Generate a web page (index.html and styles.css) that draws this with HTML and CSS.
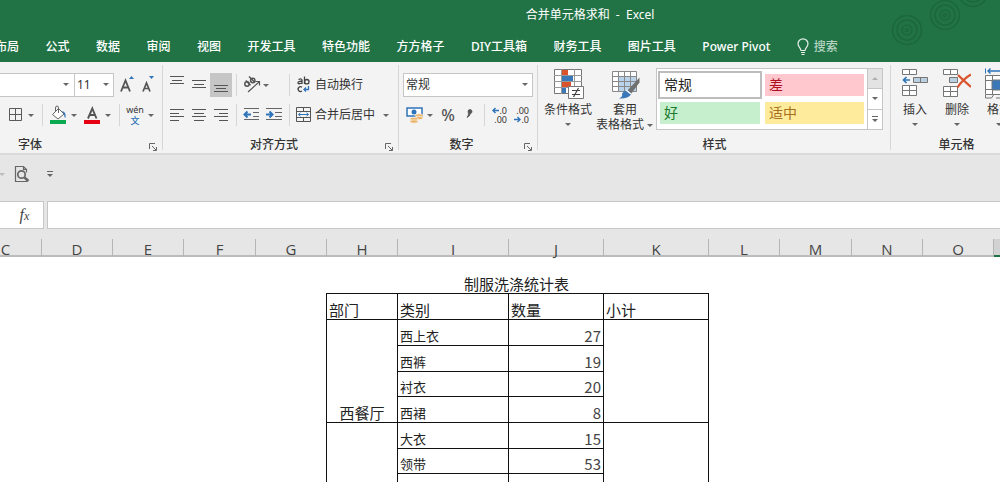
FILE: index.html
```html
<!DOCTYPE html>
<html lang="zh-CN">
<head>
<meta charset="utf-8">
<meta name="viewport" content="width=device-width, initial-scale=1">
<title>合并单元格求和 - Excel</title>
<link rel="stylesheet" href="styles.css">
</head>
<body>
<header class="titlebar">
  <svg class="rings" width="120" height="48" viewBox="0 0 120 48" fill="none" stroke="#1c673c" stroke-width="1.6">
    <circle cx="27" cy="30" r="14.500"/><circle cx="27" cy="30" r="10"/><circle cx="27" cy="30" r="5"/><circle cx="27" cy="30" r="1.5"/>
    <circle cx="65" cy="15" r="14.500"/><circle cx="65" cy="15" r="10"/><circle cx="65" cy="15" r="5"/><circle cx="65" cy="15" r="1.5"/>
    <circle cx="93" cy="-8" r="14.500"/><circle cx="93" cy="-8" r="10"/>
  </svg>
  <h1 class="doc-title">合并单元格求和&nbsp; -&nbsp; Excel</h1>
  <nav class="tabs">
    <button class="tab">布局</button><button class="tab">公式</button><button class="tab">数据</button><button class="tab">审阅</button><button class="tab">视图</button><button class="tab">开发工具</button><button class="tab">特色功能</button><button class="tab">方方格子</button><button class="tab">DIY工具箱</button><button class="tab">财务工具</button><button class="tab">图片工具</button><button class="tab">Power Pivot</button>
    <button class="tab search">
      <svg width="12" height="18" viewBox="0 0 12 18" fill="none" stroke="#e6f1ea" stroke-width="1.2"><path d="M4 12.5C4 10 1 9 1 5.8A5 5 0 0 1 11 5.8C11 9 8 10 8 12.5zM4 14.5h4M4.5 16.5h3"/></svg>
      <span>搜索</span>
    </button>
  </nav>
</header>

<section class="ribbon">
  <div class="group group-font">
    <div class="tools">
      <div class="row">
        <div class="combo combo-font"><select aria-label="字体名称"><option></option></select></div>
        <div class="combo combo-size"><select aria-label="字号"><option>11</option></select></div>
        <button class="tool" aria-label="增大字号"><svg width="20" height="22" viewBox="0 0 20 22"><path d="M4 17.500L8.500 6.500L13 17.500M5.600 13.500h5.800" fill="none" stroke="#555" stroke-width="1.800"/><path d="M12 5l2.500-3L17 5z" fill="#2f73b8"/></svg></button>
        <button class="tool" aria-label="减小字号"><svg width="20" height="22" viewBox="0 0 20 22"><path d="M4 17.500L7.500 9L11 17.500M5.200 14.500h4.600" fill="none" stroke="#555" stroke-width="1.700"/><path d="M10 2l2.500 3L15 2z" fill="#2f73b8"/></svg></button>
      </div>
      <div class="row row-font">
        <button class="split" aria-label="边框"><svg width="20" height="20" viewBox="0 0 20 20" fill="none" stroke="#5a5a5a"><path d="M4.500 3.500h12v12h-12zM10.500 3.500v12M4.500 9.500h12"/></svg><i class="caret"></i></button>
        <span class="sep"></span>
        <button class="split" aria-label="填充颜色"><svg width="20" height="20" viewBox="0 0 20 20"><path d="M4.500 9.500l6-6 5.500 5.500-6 5z" fill="#fff" stroke="#666"/><path d="M7.500 7V3q0-2 1.500-2t1.500 2v5" fill="none" stroke="#666"/><path d="M14 6q4.500 1 3.500 7-1.500-1-1.500-4z" fill="#2f73b8"/><path d="M2 15h16v4H2z" fill="#0caa50"/></svg><i class="caret"></i></button>
        <button class="split color" aria-label="字体颜色"><svg width="20" height="20" viewBox="0 0 20 20"><path d="M6 13.500L10.300 3.500L14.500 13.500M7.500 10h5.500" fill="none" stroke="#555" stroke-width="1.900"/><path d="M2 15h16v4H2z" fill="#e60012"/></svg><i class="caret"></i></button>
        <span class="sep"></span>
        <button class="split" aria-label="拼音"><span class="pinyin"><span>wén</span><b>文</b></span><i class="caret"></i></button>
      </div>
    </div>
    <div class="foot"><span class="name">字体</span><button class="launcher" aria-label="字体设置"><svg width="9" height="9" viewBox="0 0 9 9" fill="none" stroke="#666"><path d="M.5 6V.5H6M3 3l4 4M7.500 4v3.500H4"/></svg></button></div>
  </div>

  <div class="group group-align">
    <div class="tools">
      <div class="row">
        <button class="icon" aria-label="顶端对齐"><svg width="22" height="24" viewBox="0 0 22 24" stroke="#555"><path d="M4 3.500h14M6 7.500h10M4 10.500h14"/></svg></button>
        <button class="icon" aria-label="垂直居中"><svg width="22" height="24" viewBox="0 0 22 24" stroke="#555"><path d="M4 7.500h14M6 11.500h10M4 14.500h14"/></svg></button>
        <button class="icon active" aria-label="底端对齐"><svg width="22" height="24" viewBox="0 0 22 24" stroke="#555"><path d="M4 12.500h14M6 15.500h10M4 18.500h14"/></svg></button>
        <span class="sep"></span>
        <button class="split orient" aria-label="方向"><svg width="22" height="20" viewBox="0 0 22 20" fill="none" stroke="#555" stroke-width="1.500"><circle cx="6" cy="9" r="2.200"/><path d="M4.800 5.500l4.700 4.700M8 1.500l6 6"/><circle cx="11.800" cy="5.500" r="2.200"/><path d="M7 17L18 7M14.500 6.500H18.500V10.500" stroke-width="1.200"/></svg><i class="caret"></i></button>
        <span class="sep last"></span>
        <button class="labeled"><svg width="22" height="20" viewBox="0 0 22 20" fill="none" stroke="#444" stroke-width="1.300"><path d="M5.500 4.500q3.500-1.500 3.500 1V9M9 6.300q-4-.3-4 1.500T9 8M11.500 1.500V9"/><circle cx="13.800" cy="6.700" r="2.200"/><path d="M9 12.200a2.400 2.400 0 1 0 0 3.800"/><path d="M15.500 11v3.500h-4M13 12.500l-2 2 2 2" stroke="#2f73b8"/></svg>自动换行</button>
      </div>
      <div class="row">
        <button class="icon" aria-label="左对齐"><svg width="22" height="24" viewBox="0 0 22 24" stroke="#555"><path d="M4 6.500h14M4 10.500h9M4 13.500h14M4 17.500h9"/></svg></button>
        <button class="icon" aria-label="居中"><svg width="22" height="24" viewBox="0 0 22 24" stroke="#555"><path d="M4 6.500h14M6 10.500h10M4 13.500h14M6 17.500h10"/></svg></button>
        <button class="icon" aria-label="右对齐"><svg width="22" height="24" viewBox="0 0 22 24" stroke="#555"><path d="M4 6.500h14M9 10.500h9M4 13.500h14M9 17.500h9"/></svg></button>
        <span class="sep"></span>
        <button class="icon" aria-label="减少缩进"><svg width="22" height="24" viewBox="0 0 22 24" stroke="#666"><path d="M3 5.500h15M12 9.500h6M12 13.500h6M3 16.500h15"/><path d="M10 11.500H4M6.500 8.500l-3 3 3 3" fill="none" stroke="#2f73b8" stroke-width="2"/></svg></button>
        <button class="icon" aria-label="增加缩进"><svg width="22" height="24" viewBox="0 0 22 24" stroke="#666"><path d="M3 5.500h16M12 9.500h7M12 13.500h7M3 16.500h16"/><path d="M3 11.500h6M6.500 8.500l3 3-3 3" fill="none" stroke="#2f73b8" stroke-width="2"/></svg></button>
        <span class="sep last"></span>
        <button class="labeled"><svg width="22" height="20" viewBox="0 0 22 20" fill="none" stroke="#555"><path d="M3.500 2.500h14v14h-14zM3.500 6.500h14M3.500 12.500h14M10.500 2.500v4M10.500 12.500v4"/><path d="M5.500 9.500h10M7.500 7.800L5.500 9.500l2 1.700M13.500 7.800l2 1.700-2 1.700" stroke="#2f73b8"/></svg>合并后居中<i class="caret far"></i></button>
      </div>
    </div>
    <div class="foot"><span class="name">对齐方式</span><button class="launcher" aria-label="对齐设置"><svg width="9" height="9" viewBox="0 0 9 9" fill="none" stroke="#666"><path d="M.5 6V.5H6M3 3l4 4M7.500 4v3.500H4"/></svg></button></div>
  </div>

  <div class="group group-number">
    <div class="tools">
      <div class="row"><div class="combo combo-format"><select aria-label="数字格式"><option>常规</option></select></div></div>
      <div class="row">
        <button class="split" aria-label="会计数字格式"><svg width="22" height="20" viewBox="0 0 22 20"><path d="M4 3h15v8H4z" fill="#fff" stroke="#2f73b8" stroke-width="1.500"/><circle cx="11" cy="7" r="2.500" fill="#2f73b8"/><g fill="#eeb567" stroke="#f3f3f3" stroke-width=".7"><ellipse cx="16" cy="10.500" rx="4" ry="1.700"/><ellipse cx="16" cy="13" rx="4" ry="1.700"/><ellipse cx="11" cy="14" rx="4" ry="1.700"/><ellipse cx="11" cy="16.500" rx="4" ry="1.700"/></g></svg><i class="caret narrow"></i></button>
        <button class="icon sign percent">%</button>
        <button class="icon" aria-label="千位分隔样式"><svg width="22" height="24" viewBox="0 0 22 24"><path d="M9 8.500a2 2 0 1 1 2.500 2Q11 13 8 14.500 9.500 12.500 9.500 10.800z" fill="#555" stroke="#555" stroke-width=".8"/></svg></button>
        <span class="sep tight"></span>
        <button class="icon decimal" aria-label="增加小数位数"><span><svg width="7" height="7" viewBox="0 0 7 7" fill="none" stroke="#2f73b8" stroke-width="1.400"><path d="M7 3.500H1M3.500 1L1 3.500 3.500 6"/></svg>.0</span><span>.00</span></button>
        <button class="icon decimal" aria-label="减少小数位数"><span>.00</span><span><svg width="7" height="7" viewBox="0 0 7 7" fill="none" stroke="#2f73b8" stroke-width="1.400"><path d="M0 3.500h6M3.500 1L6 3.500 3.500 6"/></svg>.0</span></button>
      </div>
    </div>
    <div class="foot"><span class="name">数字</span><button class="launcher" aria-label="数字设置"><svg width="9" height="9" viewBox="0 0 9 9" fill="none" stroke="#666"><path d="M.5 6V.5H6M3 3l4 4M7.500 4v3.500H4"/></svg></button></div>
  </div>

  <div class="group group-styles">
    <div class="tools big-tools">
      <button class="big">
        <svg width="32" height="32" viewBox="0 0 32 32"><path d="M2.500 1.500h27v24h-27z" fill="#fff" stroke="#777"/><path d="M2 7.500h28M2 13.500h28M2 19.500h28M9.500 1v25M22.500 1v25" stroke="#999" fill="none"/><path d="M10 2h6v5h-6zM10 14h9v5h-9z" fill="#d9532c"/><path d="M10 8h11v5H10zM10 20h4v5h-4z" fill="#3b78b8"/><path d="M16.500 18.500h15v12h-15z" fill="#fff" stroke="#777"/><path d="M20 22.500h8M20 26.500h8M26.500 20l-5 9" stroke="#444" fill="none" stroke-width="1.200"/></svg>
        <span>条件格式</span><i class="caret"></i>
      </button>
      <button class="big big-table">
        <svg width="32" height="32" viewBox="0 0 32 32"><path d="M3.500 3.500h24v20h-24z" fill="#fff"/><path d="M10 9h18v15H10z" fill="#b9d3ea"/><path d="M3.500 3.500h24v20h-24zM3 8.500h25M3 13.500h25M3 18.500h25M9.500 3v21M15.500 3v21M21.500 3v21" fill="none" stroke="#888"/><path d="M30.500 9.500v5L22 26l-4-3z" fill="#707070"/><path d="M17.500 22.500q5 .5 4.500 4Q19 31 10 30.500q4-2 3-4.500 1-3 4.500-3.500z" fill="#3b78b8"/><path d="M17 22l5 4" stroke="#fff" stroke-width="1.500"/></svg>
        <span>套用</span><span class="wide">表格格式<i class="caret"></i></span>
      </button>
      <div class="gallery">
        <div class="swatches">
          <button class="swatch normal">常规</button><button class="swatch bad">差</button>
          <button class="swatch good">好</button><button class="swatch neutral">适中</button>
        </div>
        <div class="scroller">
          <button class="off" aria-label="上一行"><i class="caret up"></i></button>
          <button aria-label="下一行"><i class="caret"></i></button>
          <button aria-label="更多样式"><i class="caret barred"></i></button>
        </div>
      </div>
    </div>
    <div class="foot"><span class="name">样式</span></div>
  </div>

  <div class="group group-cells">
    <div class="tools big-tools">
      <button class="big">
        <svg width="28" height="32" viewBox="0 0 28 32" fill="#fff" stroke="#777"><path d="M1.500 1.500h14v5h-14zM8.500 1.500v5M1.500 17.500h14v10h-14zM8.500 17.500v10M1.500 22.500h14"/><path d="M12.500 9.500h14v5h-14zM19.500 9.500v5" fill="#b9cfe2"/><path d="M9 12H3M5.500 9L2.500 12l3 3" fill="none" stroke="#2f73b8" stroke-width="1.700"/></svg>
        <span>插入</span><i class="caret"></i>
      </button>
      <button class="big">
        <svg width="28" height="32" viewBox="0 0 28 32" fill="#fff" stroke="#777"><path d="M.5 1.500h14v5H.5zM7.500 1.500v5M.5 18.500h14v10H.5zM7.500 18.500v10M.5 23.500h14"/><path d="M6.500 9.500h8v5h-8z" fill="#b9cfe2"/><path d="M15 7q5 5 13 12M28 6.500Q20 11 14.500 19.500" fill="none" stroke="#d9532c" stroke-width="2.200"/></svg>
        <span>删除</span><i class="caret"></i>
      </button>
      <button class="big">
        <svg width="28" height="32" viewBox="0 0 28 32" fill="#fff" stroke="#777"><path d="M.5.500v5M27.500.500v5" stroke="#2f73b8"/><path d="M3 3h22M5.500.500L3 3l2.500 2.500M22.500.500L25 3l-2.500 2.500" fill="none" stroke="#2f73b8" stroke-width="1.400"/><path d="M.5 7.500h27v19H.5zM.5 12.500h27M.5 21.500h27M7.500 7.500v19M20.500 7.500v19"/><path d="M7 12h14v10H7z" fill="#3b78b8"/><path d="M.5 27v3h6l2-3M11 30h6l2-3" fill="none"/></svg>
        <span>格式</span><i class="caret"></i>
      </button>
    </div>
    <div class="foot"><span class="name">单元格</span></div>
  </div>
</section>

<div class="quickbar">
  <i class="caret faded"></i>
  <button class="tool" aria-label="打印预览"><svg width="16" height="18" viewBox="0 0 16 18" fill="none" stroke="#666" stroke-width="1.200"><path d="M12.500 14v2.500H1.500V1.500h8l3 3v3M9.500 1.500v3h3"/><circle cx="7.500" cy="9.500" r="3.700" stroke-width="1.700"/><path d="M10.500 12.500l4 3.500" stroke-width="2.400"/></svg></button>
  <button class="tool" aria-label="自定义快速访问工具栏"><i class="caret barred"></i></button>
</div>

<div class="formula">
  <button class="fx" aria-label="插入函数"><i>f</i><small>x</small></button>
  <input class="formula-input" type="text" aria-label="编辑栏">
</div>

<div class="columns">
  <span>C</span><span>D</span><span>E</span><span>F</span><span>G</span><span>H</span><span>I</span><span>J</span><span>K</span><span>L</span><span>M</span><span>N</span><span>O</span><span class="selected"></span>
</div>

<main class="sheet">
  <table class="stats">
    <caption>制服洗涤统计表</caption>
    <colgroup><col class="col-dept"><col class="col-kind"><col class="col-count"><col class="col-sum"></colgroup>
    <tbody>
      <tr><th>部门</th><th>类别</th><th>数量</th><th>小计</th></tr>
      <tr><td class="dept" rowspan="4">西餐厅</td><td>西上衣</td><td class="num">27</td><td rowspan="4"></td></tr>
      <tr><td>西裤</td><td class="num">19</td></tr>
      <tr><td>衬衣</td><td class="num">20</td></tr>
      <tr><td>西裙</td><td class="num">8</td></tr>
      <tr><td class="dept" rowspan="3"></td><td>大衣</td><td class="num">15</td><td rowspan="3"></td></tr>
      <tr><td>领带</td><td class="num">53</td></tr>
      <tr><td></td><td class="num"></td></tr>
    </tbody>
  </table>
</main>
</body>
</html>
```
FILE: styles.css
```css
* { box-sizing: border-box; }

body {
  margin: 0;
  height: 100vh;
  overflow: hidden;
  display: flex;
  flex-direction: column;
  background: #fff;
  color: #333;
  font: 12px/16px "Noto Sans", "Noto Sans CJK SC", sans-serif;
}

button, select, input { font: inherit; color: inherit; }
button { margin: 0; padding: 0; border: 0; background: none; }
svg { display: block; flex: none; }

/* Title and tabs */
.titlebar {
  position: relative;
  flex: none;
  padding: 6px 0;
  background: #217346;
  color: #fff;
  overflow: hidden;
}
.rings { position: absolute; top: 0; right: 0; }
.doc-title {
  margin: 0 0 15px;
  padding-left: 18%;
  font-size: 12px;
  line-height: 17px;
  font-weight: 400;
  text-align: center;
}
.tabs {
  display: flex;
  justify-content: space-between;
  max-width: 843px;
  margin-left: -5px;
}
.tab { line-height: 18px; font-weight: 500; white-space: nowrap; }
.search { display: flex; gap: 5px; color: #b5d3c1; }

/* Ribbon */
.ribbon {
  flex: none;
  display: flex;
  overflow: hidden;
  background: #f3f3f3;
  border-bottom: 2px solid #dadada;
}
.group {
  position: relative;
  flex: none;
  display: flex;
  flex-direction: column;
}
.group::after {
  content: "";
  position: absolute;
  inset: 3px 0 3px auto;
  width: 1px;
  background: #d6d6d6;
}
.tools { height: 74px; padding: 11px 0 0 4px; display: flex; flex-direction: column; gap: 6px; }
.group-font { width: 163px; }
.group-font .tools { padding-left: 0; }
.group-align { width: 236px; }
.group-align .tools { padding-left: 3px; }
.group-number { width: 139px; }
.group-styles { width: 353px; }
.group-cells { width: 131px; }

.row { display: flex; align-items: center; height: 24px; }
.row-font { padding-left: 5px; }
.sep { width: 1px; height: 22px; margin: 0 4px; background: #d6d6d6; }
.row-font .sep { margin: 0 5px; }
.sep.last { margin-right: 3px; }
.sep.tight { margin: 0 3px; }
.tool { width: 22px; display: flex; justify-content: center; }
.icon { width: 22px; height: 24px; display: flex; align-items: center; justify-content: center; }
.active { background: #c6c6c6; }
.split { display: flex; align-items: center; }
.split.color { margin-left: 2px; }
.labeled { display: flex; align-items: center; white-space: nowrap; }

.caret { width: 12px; height: 12px; flex: none; display: flex; align-items: center; justify-content: center; }
.caret::before {
  content: "";
  border: 3px solid transparent;
  border-top-color: #666;
  border-bottom: 0;
}
.orient { width: 44px; }
.orient .caret { width: 6px; }
.caret.narrow { width: 10px; margin-right: 2px; }
.caret.far { margin-left: 5px; }
.caret.up::before { border: 3px solid transparent; border-bottom-color: #b0b0b0; border-top: 0; }
.caret.faded::before { border-top-color: #bbb; }
.caret.barred { flex-direction: column; gap: 2px; }
.caret.barred::before { order: 2; }
.caret.barred::after { content: ""; width: 6px; height: 1px; background: #666; }

.combo { position: relative; height: 24px; }
.combo::after {
  content: "";
  position: absolute;
  top: 10px;
  right: 5px;
  border: 3px solid transparent;
  border-top-color: #666;
  border-bottom: 0;
  pointer-events: none;
}
.combo select {
  appearance: none;
  width: 100%;
  height: 100%;
  padding: 0 2px;
  border: 1px solid #c6c6c6;
  border-radius: 0;
  background: #fff;
}
.combo-font { width: 74px; }
.combo-font select { border-left: 0; border-right: 0; }
.combo-size { width: 40px; margin-right: 2px; }
.combo-format { width: 130px; }

.pinyin { width: 20px; display: flex; flex-direction: column; align-items: center; font-size: 9px; line-height: 10px; }
.pinyin b { color: #2f73b8; font-size: 9px; line-height: 11px; font-weight: 500; }
.sign { font-size: 16px; font-weight: 500; color: #555; }
.decimal { flex-direction: column; align-items: stretch; font-size: 9px; line-height: 9px; }
.decimal span { display: flex; align-items: center; justify-content: flex-end; padding-right: 3px; }

.foot { display: flex; height: 16px; line-height: 16px; margin-top: 1px; }
.name { flex: 1; text-align: center; font-weight: 500; }
.group-font .name { padding-left: 18px; text-align: left; }
.launcher { width: 14px; padding-top: 4px; }

.big-tools { flex-direction: row; gap: 0; padding: 6px 0 0 4px; }
.big {
  width: 52px;
  display: flex;
  flex-direction: column;
  align-items: center;
  line-height: 15px;
  white-space: nowrap;
}
.big svg { margin-bottom: 2px; }
.big .caret { margin-top: 1px; }
.big-table { width: 62px; }
.wide { display: flex; align-items: center; padding-left: 2px; }
.group-cells .big-tools { padding-left: 3px; }
.group-cells .big { width: 42px; }

.gallery { display: flex; width: 227px; height: 62px; border: 1px solid #c6c6c6; background: #fff; }
.swatches { flex: 1; display: grid; grid-template-columns: 104px 99px; column-gap: 3px; grid-template-rows: 28px 28px; padding: 2px 1px; }
.swatch { height: 22px; align-self: center; text-align: left; padding-left: 4px; font-size: 14px; line-height: 20px; }
.normal { height: 28px; padding-left: 4px; border: 2px solid #bdbdbd; color: #222; }
.bad { background: #ffc7ce; color: #b0101e; }
.good { background: #c6efce; color: #1c7a2c; margin: 0 2px 0 2px; }
.neutral { background: #ffeb9c; color: #a8701a; }
.scroller { width: 15px; display: flex; flex-direction: column; border-left: 1px solid #c6c6c6; }
.scroller button { flex: 1; display: flex; align-items: center; justify-content: center; border-top: 1px solid #c6c6c6; }
.scroller .off { border-top: 0; background: #e3e3e3; }

/* Quick access and formula bar */
.quickbar { flex: none; display: flex; align-items: center; height: 46px; padding-bottom: 8px; background: #e6e6e6; }
.quickbar .caret.faded { margin-left: -4px; }
.quickbar .tool { width: 28px; }
.formula { flex: none; display: flex; gap: 3px; background: #e6e6e6; }
.fx {
  width: 44px;
  height: 28px;
  padding-left: 6px;
  border: 1px solid #c6c6c6;
  border-left: 0;
  background: #fff;
  color: #444;
  font: 400 16px/20px "Liberation Serif", serif;
}
.fx small { font-size: 12px; font-style: italic; }
.formula-input { flex: 1; min-width: 0; height: 28px; border: 1px solid #c6c6c6; border-right: 0; padding: 0 6px; background: #fff; }

/* Worksheet */
.columns {
  flex: none;
  display: grid;
  grid-template-columns: 72px 71px 71px 72px 71px 71px 111px 95px 105px 71px 72px 71px 71px 71px;
  height: 28px;
  margin-left: -30px;
  padding-top: 10px;
  background: #e6e6e6;
  border-bottom: 2px solid #bcbcbc;
  color: #444;
  font: 15px/20px "Open Sans", sans-serif;
  text-align: center;
}
.columns span { border-right: 1px solid #b5b5b5; height: 17px; }
.columns .selected { height: 18px; background: #d2d2d2; border-bottom: 2px solid #217346; }
.sheet { flex: 1; min-height: 0; overflow: hidden; padding-left: 326px; }
.stats {
  width: 383px;
  table-layout: fixed;
  border-collapse: collapse;
  font: 13px/16px "Noto Sans CJK SC", sans-serif;
  color: #222;
}
.stats caption { padding: 18px 2px 1px 0; font-size: 15px; line-height: 17px; }
.col-dept { width: 71px; }
.col-kind { width: 111px; }
.col-count { width: 95px; }
.col-sum { width: 105px; }
.stats tr { height: 26px; }
.stats tr:nth-child(3n + 4) { height: 25px; }
.stats th, .stats td { padding: 0 2px 1px; border: 1px solid #111; vertical-align: bottom; text-align: left; }
.stats th { font-size: 15px; font-weight: 400; }
.stats .dept { font-size: 15px; text-align: center; }
.stats .num { font-size: 15px; text-align: right; color: #444; }
```
